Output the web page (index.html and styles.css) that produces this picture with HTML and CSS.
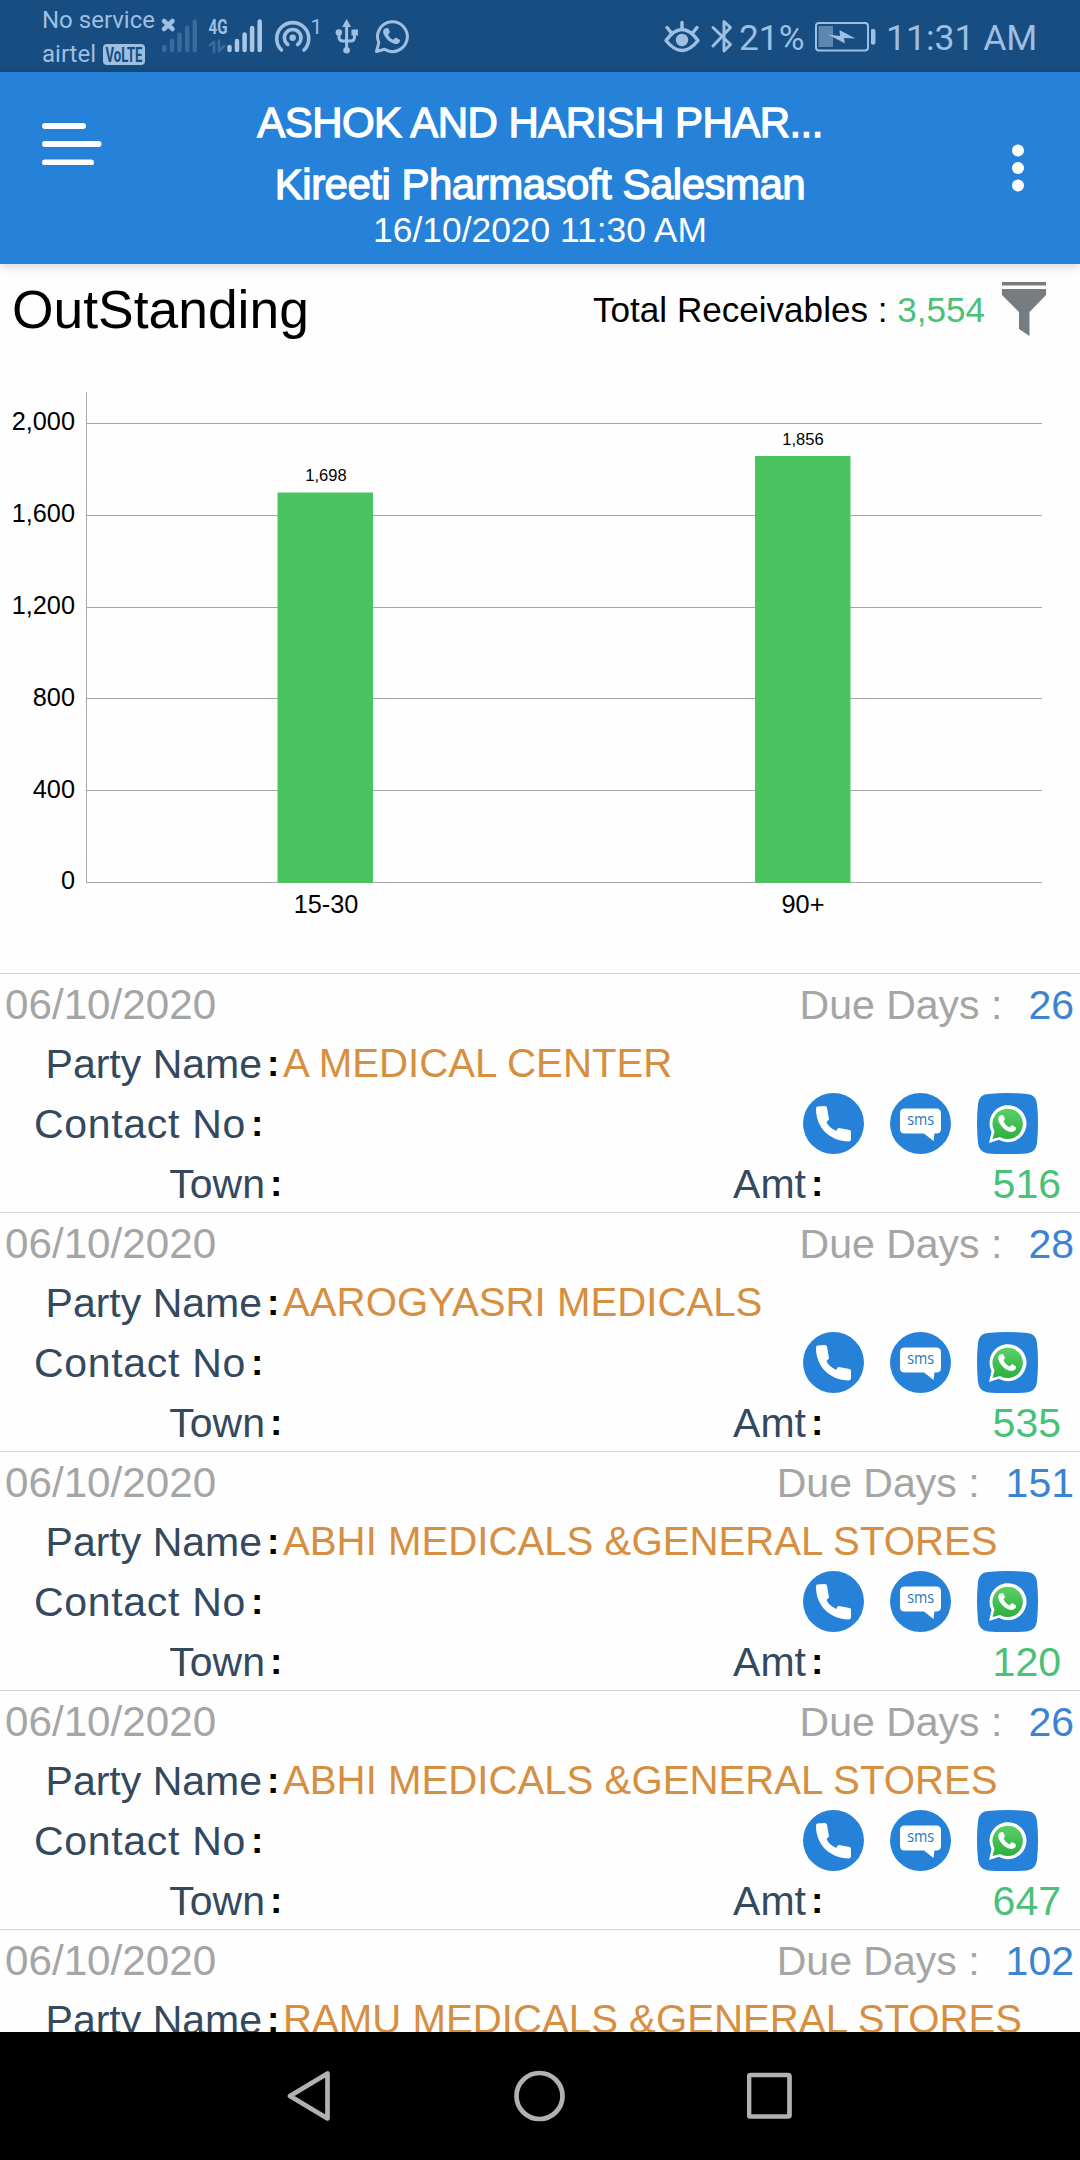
FILE: index.html
```html
<!DOCTYPE html>
<html lang="en">
<head>
    <meta charset="UTF-8">
    <meta name="viewport" content="width=device-width, initial-scale=1.0">
    <title>OutStanding</title>
    <link rel="stylesheet" href="styles.css">
</head>
<body>
    <!-- Shared icons -->
    <svg class="sprite" aria-hidden="true">
        <defs>
            <linearGradient id="waGreen" x1="0" y1="0" x2="0" y2="1">
                <stop offset="0" stop-color="#5bd066"/>
                <stop offset="1" stop-color="#2cb040"/>
            </linearGradient>
        </defs>
        <symbol id="icon-phone" viewBox="0 0 61 61">
            <circle cx="30.5" cy="30.5" r="30.5" fill="#2681d9"/>
            <path fill="#fff" d="M14 13.500Q13 14 13 16C13 35 27 48 46 48.500Q48 48 48 46V38.500Q48 37 46.500 37L36 35Q34 35 33.500 38Q26 35 23.500 29L26 26.500L24 14.500Q23.500 13 22 13Z"/>
        </symbol>
        <symbol id="icon-sms" viewBox="0 0 61 61">
            <circle cx="30.5" cy="30.5" r="30.500" fill="#2681d9"/>
            <path fill="#fff" d="M15 15.500H46Q51 15.500 51 20V36Q51 40.500 46 40.500H44.500L43.500 48L34 40.500H15Q10 40.500 10 36V20Q10 15.500 15 15.500Z"/>
            <text class="sms-text" x="30.700" y="32" text-anchor="middle" textLength="27" lengthAdjust="spacingAndGlyphs">sms</text>
        </symbol>
        <symbol id="icon-whatsapp" viewBox="0 0 61 61">
            <path fill="#2681d9" d="M11 1Q30 -1 50 1Q59 1.500 60 11Q62 30 60 50Q59 59.500 50 60.500Q30 62 11 60.500Q2 59.500 1 50Q-1 30 1 11Q2 1.500 11 1Z"/>
            <path fill="#fff" d="M12 50L14.500 39A18.500 18.500 0 1 1 22 46.800Z"/>
            <path fill="url(#waGreen)" d="M15.500 46L17.500 38.500A15.200 15.200 0 1 1 23 44Z"/>
            <path fill="#fff" d="M23 22.500C20.500 24 21 28 23 31C26 36 31 39 35 39C38 38.500 39.500 36.500 39 34.500L35 32L32.500 34.500Q28 32 26.500 28.500L28 26L26 22Z"/>
        </symbol>
    </svg>

    <div class="status-bar">
        <div class="carrier">
            <span>No service</span>
            <span class="carrier-row">airtel
                <svg width="42" height="21" viewBox="0 0 42 21">
                    <rect width="42" height="21" rx="4" fill="#9dbfe2"/>
                    <text class="volte" x="2.500" y="17.800" textLength="37" lengthAdjust="spacingAndGlyphs">VoLTE</text>
                </svg>
            </span>
        </div>
        <svg class="status-icons" width="254" height="72" viewBox="158 0 254 72">
            <path class="line" stroke-width="4.500" d="M164 21l8.500 8m0-8l-8.500 8"/>
            <g class="bars faded">
                <path d="M164.300 47v3M172 41v9M179.500 34.500v15.500M187.200 28v22M194.800 21.500v28.500"/>
            </g>
            <text class="network" x="208.500" y="33.500" textLength="19" lengthAdjust="spacingAndGlyphs">4G</text>
            <path class="line faded" stroke-width="2.800" d="M210 45l4-3v10M219 41v10l5-5"/>
            <g class="bars">
                <path d="M229.500 47v3M237 41v9M244.600 34.500v15.500M252.100 28v22M259.700 21.500v28.500"/>
            </g>
            <!-- hotspot -->
            <circle class="solid" cx="292.700" cy="37.800" r="3.200"/>
            <path class="line" stroke-width="3.600" d="M287.800 44.500A8.300 8.300 0 1 1 297.600 44.500M281.500 50A16 16 0 1 1 304 50"/>
            <text class="clients" x="310.500" y="34">1</text>
            <!-- usb -->
            <path class="line" stroke-width="3" d="M346.600 24v26M339 34v3q0 4 4 4h7.500q4 0 4-4v-3"/>
            <path class="solid" d="M346.600 19l4.500 8h-9zM351.500 29.500h6.500v6h-6.500z"/>
            <circle class="solid" cx="338.800" cy="32.500" r="3.200"/>
            <circle class="solid" cx="346.600" cy="50.300" r="3.300"/>
            <!-- whatsapp -->
            <path class="line" stroke-width="3" d="M376.500 51.500l2.300-8.800A14.900 14.900 0 1 1 384.500 49.300Z"/>
            <path class="solid" d="M385 28.500c-2 1-2.500 3.500-1.200 6 3 5.500 7 8.500 11.500 9.500 3 .3 5.200-2 4.700-4l-4.200-2.600-2.700 2.300q-3.500-1.500-5.100-5l2-2.400-1.800-4.300z"/>
        </svg>
        <svg class="status-eye" width="76" height="72" viewBox="660 0 76 72">
            <path class="line" stroke-width="3.500" d="M666 40.500q16-22 32 0q-16 20-32 0zM682 22.500v6M667 27.500l4 5M697 27.500l-4 5"/>
            <circle class="solid" cx="682" cy="40" r="6.200"/>
            <path class="line" stroke-width="3" d="M713 27.500l17.500 17-6.500 6.500v-29.500l6.500 6-17.500 18.500"/>
        </svg>
        <span class="percent">21%</span>
        <svg class="battery" width="62" height="72" viewBox="814 0 62 72">
            <rect x="816" y="23" width="52" height="27.500" rx="3" fill="none" stroke="#9dbfe2" stroke-width="2"/>
            <rect x="818.500" y="26" width="14.500" height="21" fill="#5d86b1"/>
            <path class="solid" d="M828 34.500l12 1.500-.5-6 16 8.500-11.500-.500 1 5.500zM871 29.500q4.500-2 4.500 2v10.500q0 4-4.500 2z"/>
        </svg>
        <span class="clock">11:31 AM</span>
    </div>

    <header class="app-header">
        <svg class="menu-icon" width="60" height="42" viewBox="0 0 60 42">
            <path d="M3 3h38M3 21h53.500M3 39.500h46"/>
        </svg>
        <div class="header-text">
            <h1 class="company">ASHOK AND HARISH PHAR...</h1>
            <h2 class="user">Kireeti Pharmasoft Salesman</h2>
            <p class="sync-time">16/10/2020 11:30 AM</p>
        </div>
        <svg class="more-icon" width="12" height="48" viewBox="0 0 12 48">
            <circle cx="6" cy="6.500" r="6"/>
            <circle cx="6" cy="24" r="6"/>
            <circle cx="6" cy="41.500" r="6"/>
        </svg>
    </header>

    <main class="content">
        <div class="summary">
            <h3 class="page-title">OutStanding</h3>
            <p class="total">Total Receivables : <span class="total-value">3,554</span></p>
            <svg class="filter-icon" width="44" height="54" viewBox="0 0 44 54">
                <path d="M0 0h44v3.500H0zM0 7h44v6L27.500 30v24L17 47V30L0 13z"/>
            </svg>
        </div>

        <svg class="chart" width="1080" height="613" viewBox="0 360 1080 613">
            <path class="grid" d="M86 423.500H1042M86 515.500H1042M86 607.500H1042M86 698.500H1042M86 790.500H1042M86 882.500H1042M86.500 392V883"/>
            <g class="bar">
                <rect x="277.500" y="492.500" width="95.500" height="390.500"/>
                <rect x="755" y="456" width="95.500" height="427"/>
            </g>
            <g class="axis-y">
                <text x="75" y="430.300">2,000</text>
                <text x="75" y="522.300">1,600</text>
                <text x="75" y="614">1,200</text>
                <text x="75" y="705.500">800</text>
                <text x="75" y="797.500">400</text>
                <text x="75" y="889.300">0</text>
            </g>
            <g class="axis-x">
                <text x="326" y="912.700">15-30</text>
                <text x="803" y="912.700">90+</text>
            </g>
            <g class="bar-value">
                <text x="326" y="480.700">1,698</text>
                <text x="803" y="445.300">1,856</text>
            </g>
        </svg>

        <ul class="party-list">
            <li class="party">
                <div class="line-top"><span class="date">06/10/2020</span><span class="due">Due Days :</span><span class="days">26</span></div>
                <div class="field"><span class="label">Party Name</span><b class="colon">:</b><span class="name">A MEDICAL CENTER</span></div>
                <div class="field"><span class="label contact">Contact No</span><b class="colon">:</b>
                    <div class="actions"><svg><use href="#icon-phone"/></svg><svg><use href="#icon-sms"/></svg><svg><use href="#icon-whatsapp"/></svg></div>
                </div>
                <div class="field"><span class="label town">Town</span><b class="colon">:</b><span class="amt-label">Amt</span><b class="colon">:</b><span class="amount">516</span></div>
            </li>
            <li class="party">
                <div class="line-top"><span class="date">06/10/2020</span><span class="due">Due Days :</span><span class="days">28</span></div>
                <div class="field"><span class="label">Party Name</span><b class="colon">:</b><span class="name">AAROGYASRI MEDICALS</span></div>
                <div class="field"><span class="label contact">Contact No</span><b class="colon">:</b>
                    <div class="actions"><svg><use href="#icon-phone"/></svg><svg><use href="#icon-sms"/></svg><svg><use href="#icon-whatsapp"/></svg></div>
                </div>
                <div class="field"><span class="label town">Town</span><b class="colon">:</b><span class="amt-label">Amt</span><b class="colon">:</b><span class="amount">535</span></div>
            </li>
            <li class="party">
                <div class="line-top"><span class="date">06/10/2020</span><span class="due">Due Days :</span><span class="days">151</span></div>
                <div class="field"><span class="label">Party Name</span><b class="colon">:</b><span class="name">ABHI MEDICALS &amp;GENERAL STORES</span></div>
                <div class="field"><span class="label contact">Contact No</span><b class="colon">:</b>
                    <div class="actions"><svg><use href="#icon-phone"/></svg><svg><use href="#icon-sms"/></svg><svg><use href="#icon-whatsapp"/></svg></div>
                </div>
                <div class="field"><span class="label town">Town</span><b class="colon">:</b><span class="amt-label">Amt</span><b class="colon">:</b><span class="amount">120</span></div>
            </li>
            <li class="party">
                <div class="line-top"><span class="date">06/10/2020</span><span class="due">Due Days :</span><span class="days">26</span></div>
                <div class="field"><span class="label">Party Name</span><b class="colon">:</b><span class="name">ABHI MEDICALS &amp;GENERAL STORES</span></div>
                <div class="field"><span class="label contact">Contact No</span><b class="colon">:</b>
                    <div class="actions"><svg><use href="#icon-phone"/></svg><svg><use href="#icon-sms"/></svg><svg><use href="#icon-whatsapp"/></svg></div>
                </div>
                <div class="field"><span class="label town">Town</span><b class="colon">:</b><span class="amt-label">Amt</span><b class="colon">:</b><span class="amount">647</span></div>
            </li>
            <li class="party">
                <div class="line-top"><span class="date">06/10/2020</span><span class="due">Due Days :</span><span class="days">102</span></div>
                <div class="field"><span class="label">Party Name</span><b class="colon">:</b><span class="name">RAMU MEDICALS &amp;GENERAL STORES</span></div>
            </li>
        </ul>
    </main>

    <nav class="nav-bar">
        <svg width="44" height="52" viewBox="0 0 44 52"><path d="M40.500 3.500v45L3 26z"/></svg>
        <svg width="52" height="52" viewBox="0 0 52 52"><circle cx="26.500" cy="26" r="23"/></svg>
        <svg width="46" height="52" viewBox="0 0 46 52"><rect x="2" y="5" width="40.500" height="41.500" rx="1.500"/></svg>
    </nav>
</body>
</html>
```
FILE: styles.css
```css
* {
    margin: 0;
    padding: 0;
    box-sizing: border-box;
}

body {
    width: 1080px;
    height: 2160px;
    overflow: hidden;
    display: flex;
    flex-direction: column;
    background: #fefefe;
    font-family: "Liberation Sans", Arial, sans-serif;
    font-weight: 400;
    color: #000;
}

svg {
    display: block;
    flex-shrink: 0;
}

.sprite {
    position: absolute;
    width: 0;
    height: 0;
}

.sms-text {
    font: 17px "Open Sans", sans-serif;
    fill: #2a76bd;
}

/* Status bar */
.status-bar {
    height: 72px;
    flex-shrink: 0;
    display: flex;
    background: #174d80;
    color: #9dbfe2;
    font-family: Roboto, sans-serif;
    white-space: nowrap;
}

.carrier {
    width: 158px;
    padding: 3px 0 0 42px;
    font-size: 24px;
    line-height: 34px;
    display: flex;
    flex-direction: column;
}

.carrier-row {
    display: flex;
    align-items: center;
    gap: 7px;
}

.volte {
    font: 700 20px Roboto, sans-serif;
    fill: #174d80;
}

.network {
    font: 700 20px Roboto, sans-serif;
    fill: #9dbfe2;
}

.clients {
    font: 21px Roboto, sans-serif;
    fill: #9dbfe2;
}

.solid {
    fill: #9dbfe2;
}

.line {
    fill: none;
    stroke: #9dbfe2;
    stroke-linecap: round;
    stroke-linejoin: round;
}

.bars {
    fill: none;
    stroke: #a9c6e4;
    stroke-width: 4.5;
    stroke-linecap: round;
}

.faded {
    stroke: #3b6a9c;
}

.status-eye {
    margin-left: auto;
}

.percent {
    width: 78px;
    padding-left: 3px;
    font-size: 35.3px;
    line-height: 76px;
}

.clock {
    width: 204px;
    padding-left: 10px;
    font-size: 35.5px;
    line-height: 76px;
}

/* App header */
.app-header {
    height: 192px;
    flex-shrink: 0;
    display: flex;
    background: #2681d9;
    color: #fff;
    box-shadow: 0 2px 10px rgba(0, 0, 0, 0.18);
}

.menu-icon {
    margin: 51px 0 0 42px;
    fill: none;
    stroke: #fff;
    stroke-width: 6;
    stroke-linecap: round;
}

.header-text {
    flex: 1;
    padding: 20px 34px 0 0;
    text-align: center;
    white-space: nowrap;
}

.company,
.user {
    font-size: 42px;
    font-weight: 400;
    line-height: 62px;
    letter-spacing: -0.55px;
    -webkit-text-stroke: 1.3px #fff;
}

.user {
    letter-spacing: -0.5px;
}

.sync-time {
    font-size: 35.4px;
    line-height: 28px;
}

.more-icon {
    margin: 72px 56px 0 0;
    fill: #fff;
}

/* Totals */
.content {
    flex: 1;
    min-height: 0;
    overflow: hidden;
}

.summary {
    height: 96px;
    display: flex;
    align-items: flex-start;
    padding: 0 34px 0 12px;
    white-space: nowrap;
}

.page-title {
    font-size: 53.4px;
    font-weight: 400;
    line-height: 92px;
}

.total {
    margin-left: auto;
    font-size: 35.1px;
    line-height: 92px;
}

.total-value,
.amount {
    color: #4bc178;
}

.filter-icon {
    margin: 18px 0 0 17px;
    fill: #777c80;
}

/* Chart */
.grid {
    fill: none;
    stroke: #a6a6a6;
}

.bar {
    fill: #49c461;
}

.chart text {
    font-size: 25.3px;
}

.chart .bar-value text {
    font-size: 16.5px;
}

.axis-y {
    text-anchor: end;
}

.axis-x,
.bar-value {
    text-anchor: middle;
}

/* Receivables list */
.party-list {
    list-style: none;
}

.party {
    height: 239px;
    padding-top: 1px;
    border-top: 1px solid #d6d6d6;
    font-size: 41px;
    line-height: 62px;
    white-space: nowrap;
}

.line-top {
    height: 58px;
    display: flex;
    padding: 0 6px 0 5px;
    color: #a5a5a5;
    line-height: 60px;
}

.date {
    font-size: 42.2px;
}

.due {
    margin-left: auto;
}

.days {
    margin-left: 26px;
    color: #3d84d0;
}

.field {
    height: 60px;
    display: flex;
}

.label {
    width: 262px;
    text-align: right;
    color: #34495e;
}

.label.contact {
    width: 246px;
    letter-spacing: 0.7px;
}

.label.town {
    width: 265px;
}

.colon {
    width: 21px;
    padding-left: 5px;
    font-size: 37px;
}

.name {
    font-size: 40.2px;
    color: #d68e41;
}

.actions {
    display: flex;
    align-items: center;
    gap: 26px;
    margin-left: auto;
    padding-right: 42px;
}

.actions svg {
    width: 61px;
    height: 61px;
}

.amt-label {
    margin-left: auto;
    color: #34495e;
}

.amount {
    width: 253px;
    padding-right: 19px;
    text-align: right;
}

/* Android navigation */
.nav-bar {
    height: 128px;
    flex-shrink: 0;
    display: flex;
    justify-content: space-between;
    align-items: center;
    padding: 0 287px;
    background: #000;
}

.nav-bar svg {
    fill: none;
    stroke: #b1b1b1;
    stroke-width: 4.7;
    stroke-linejoin: round;
}
```
